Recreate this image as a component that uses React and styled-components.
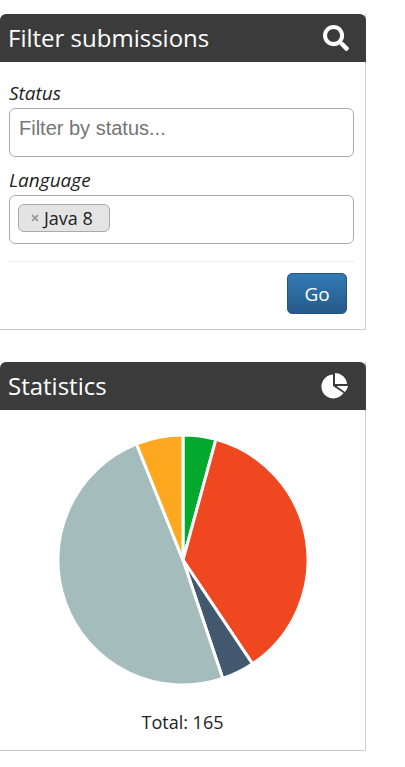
import React from 'react'
import styled, { createGlobalStyle } from 'styled-components'
import { FaSearch, FaTimes } from 'react-icons/fa'

const GlobalStyle = createGlobalStyle`
  html, body {
    margin: 0;
    padding: 0;
    background: #fff;
    font-family: "Open Sans", "Noto Sans", sans-serif;
    color: #222;
  }
`

const Page = styled.div`
  width: 405px;
  height: 767px;
  padding-top: 14px;
  box-sizing: border-box;
  overflow: hidden;
`

const Panel = styled.section`
  width: 366px;
  box-sizing: border-box;
  border-right: 1px solid #ccc;
  border-bottom: 1px solid #ccc;
  margin-bottom: 32px;
`

const PanelHeader = styled.header`
  height: 48px;
  margin-right: -1px;
  padding: 0 17px 0 8px;
  display: flex;
  align-items: center;
  justify-content: space-between;
  background: #3b3b3b;
  border-radius: 6px 6px 0 0;
  color: #fff;
`

const PanelTitle = styled.h2`
  margin: 0;
  font-size: 24px;
  font-weight: 400;
  line-height: 48px;
`

const FilterForm = styled.form`
  padding: 16px 11px 15px 9px;
  display: flex;
  flex-direction: column;
`

const Label = styled.label`
  font-size: 19px;
  font-style: italic;
  line-height: 30px;
  height: 30px;
  margin-top: ${p => p.$gap || 0}px;
  font-weight: 400;
  color: #222;
`

const TextField = styled.input`
  height: 49px;
  box-sizing: border-box;
  padding: 0 9px 8px;
  border: 1px solid #aaa;
  border-radius: 6px;
  font-family: "Liberation Sans", Arial, sans-serif;
  font-size: 20px;
  outline: none;
  &::placeholder {
    color: #757575;
    opacity: 1;
  }
`

const TagField = styled.div`
  height: 49px;
  box-sizing: border-box;
  padding: 8px;
  border: 1px solid #aaa;
  border-radius: 6px;
  display: flex;
  align-items: flex-start;
`

const Tag = styled.span`
  width: 92px;
  height: 28px;
  box-sizing: border-box;
  display: flex;
  align-items: center;
  gap: 4px;
  padding-left: 11px;
  background: #e4e4e4;
  border: 1px solid #aaa;
  border-radius: 6px;
  font-size: 18px;
  color: #222;
`

const TagRemove = styled.span`
  display: flex;
  color: #999;
  font-size: 10px;
`

const Divider = styled.hr`
  width: 100%;
  margin: 17px 0 11px;
  border: none;
  border-top: 1px solid #eee;
`

const Actions = styled.div`
  display: flex;
  justify-content: flex-end;
  padding-right: 7px;
`

const GoButton = styled.button`
  width: 60px;
  height: 41px;
  padding: 0;
  background: linear-gradient(to bottom, #337ab7, #265a88);
  border: 1px solid #245580;
  border-radius: 5px;
  color: #fff;
  font-family: inherit;
  font-size: 19px;
`

const ChartBody = styled.div`
  display: flex;
  flex-direction: column;
  align-items: center;
  padding: 24px 0 15px;
`

const Total = styled.div`
  margin-top: 23px;
  font-size: 18px;
  line-height: 26px;
  color: #222;
`

const slices = [
  { count: 7, color: '#02a92c' },
  { count: 60, color: '#ef4820' },
  { count: 7, color: '#42586e' },
  { count: 81, color: '#a5bcbd' },
  { count: 10, color: '#ffa81f' },
]
const total = slices.reduce((sum, s) => sum + s.count, 0)

const point = (count, r) => {
  const a = (count / total) * 2 * Math.PI
  return [r * Math.sin(a), -r * Math.cos(a)].map(n => n.toFixed(2)).join(' ')
}

const PieChart = () => {
  let seen = 0
  return (
    <svg width="252" height="252" viewBox="-126 -126 252 252">
      {slices.map(s => {
        const start = seen
        seen += s.count
        const large = s.count / total > 0.5 ? 1 : 0
        const d = `M0 0L${point(start, 125)}A125 125 0 ${large} 1 ${point(seen, 125)}Z`
        return <path key={s.color} d={d} fill={s.color} stroke="#fff" strokeWidth="3" strokeLinejoin="round" />
      })}
    </svg>
  )
}

const PieIcon = () => (
  <svg width="28" height="26" viewBox="0 0 28 26" fill="#fff">
    <path d="M12 1.5A12 12 0 1 0 22.5 20L12 13Z" />
    <path d="M14 0A12 12 0 0 1 26 11H14Z" />
    <path d="M15.5 13H27A12 12 0 0 1 24 19Z" />
  </svg>
)

const App = () => (
  <Page>
    <GlobalStyle />
    <Panel>
      <PanelHeader>
        <PanelTitle>Filter submissions</PanelTitle>
        <FaSearch size={26} />
      </PanelHeader>
      <FilterForm>
        <Label>Status</Label>
        <TextField placeholder="Filter by status..." />
        <Label $gap={8}>Language</Label>
        <TagField>
          <Tag>
            <TagRemove><FaTimes /></TagRemove>
            Java 8
          </Tag>
        </TagField>
        <Divider />
        <Actions>
          <GoButton type="button">Go</GoButton>
        </Actions>
      </FilterForm>
    </Panel>
    <Panel>
      <PanelHeader>
        <PanelTitle>Statistics</PanelTitle>
        <PieIcon />
      </PanelHeader>
      <ChartBody>
        <PieChart />
        <Total>Total: 165</Total>
      </ChartBody>
    </Panel>
  </Page>
)

export default App
